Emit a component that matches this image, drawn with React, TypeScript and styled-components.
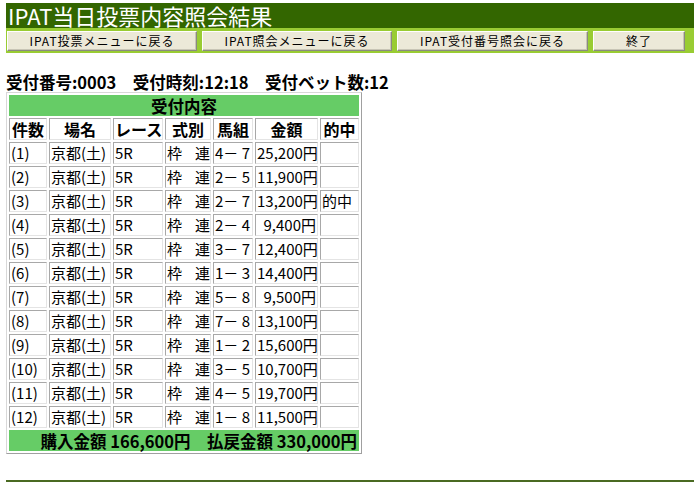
import React from "react";
import styled, { createGlobalStyle } from "styled-components";

const Global = createGlobalStyle`
  html, body { margin: 0; padding: 0; background: #ffffff; }
  body { font-family: "Noto Sans CJK JP", "Noto Sans", sans-serif; color: #000; }
`;

const Page = styled.div`
  padding: 3px 0 0 6px;
`;

const TitleBar = styled.div`
  background: #336600;
  color: #ffffff;
  height: 25px;
  display: flex;
  align-items: center;
  padding-left: 2px;
  font-size: 22px;
  line-height: 25px;
`;

const ButtonBar = styled.div`
  background: #99cc33;
  height: 25px;
  display: flex;
  align-items: center;
  gap: 5px;
  padding-left: 1px;
`;

const NavButton = styled.button<{ $w: number }>`
  width: ${(p) => p.$w}px;
  height: 20px;
  background: #ece9d8;
  border: 1px solid;
  border-color: #ffffff #8a8a80 #8a8a80 #ffffff;
  box-shadow: inset -1px -1px 0 #c8c5b5;
  font-family: "Noto Sans CJK JP", sans-serif;
  font-size: 12px;
  letter-spacing: 1px;
  color: #000;
  padding: 0;
  line-height: 18px;
`;

const Info = styled.div`
  margin-top: 20px;
  font-size: 16.5px;
  font-weight: bold;
  line-height: 19px;
  white-space: pre;
`;

const Table = styled.table`
  table-layout: fixed;
  width: 356px;
  border-collapse: separate;
  border-spacing: 2px;
  border: 1px solid;
  border-color: #d8d8d8 #a0a0a0 #a0a0a0 #d8d8d8;
  font-size: 15px;
  line-height: 18px;
`;

const Col = styled.col<{ $w: number }>`
  width: ${(p) => p.$w}px;
`;

const Cell = styled.td<{ $align?: string }>`
  height: 22px;
  padding: 0 1px;
  border: 1px solid;
  border-color: #a8a8a8 #e4e4e4 #e4e4e4 #a8a8a8;
  text-align: ${(p) => p.$align || "left"};
  white-space: pre;
  overflow: visible;
  box-sizing: border-box;
`;

const TightCell = styled(Cell)`
  letter-spacing: -1px;
`;

const HeadCell = styled(Cell)`
  font-weight: bold;
  font-size: 16px;
  text-align: center;
  height: 22px;
`;

const GreenCell = styled.td<{ $align?: string }>`
  background: #66cc66;
  height: 21px;
  padding: 0 2px;
  border: 0;
  font-weight: bold;
  font-size: 16.5px;
  text-align: ${(p) => p.$align || "center"};
  white-space: pre;
  box-sizing: border-box;
`;

const Rule = styled.div`
  margin-top: 26px;
  height: 2px;
  background: #4a6a22;
`;

const rows: [string, string, string][] = [
  ["(1)", "4－ 7", "25,200円"],
  ["(2)", "2－ 5", "11,900円"],
  ["(3)", "2－ 7", "13,200円"],
  ["(4)", "2－ 4", "9,400円"],
  ["(5)", "3－ 7", "12,400円"],
  ["(6)", "1－ 3", "14,400円"],
  ["(7)", "5－ 8", "9,500円"],
  ["(8)", "7－ 8", "13,100円"],
  ["(9)", "1－ 2", "15,600円"],
  ["(10)", "3－ 5", "10,700円"],
  ["(11)", "4－ 5", "19,700円"],
  ["(12)", "1－ 8", "11,500円"],
];

const colWidths = [38, 62, 50, 46, 40, 63, 39];

export default function App() {
  return (
    <>
      <Global />
      <Page>
        <TitleBar>IPAT当日投票内容照会結果</TitleBar>
        <ButtonBar>
          <NavButton $w={190}>IPAT投票メニューに戻る</NavButton>
          <NavButton $w={190}>IPAT照会メニューに戻る</NavButton>
          <NavButton $w={191}>IPAT受付番号照会に戻る</NavButton>
          <NavButton $w={92}>終了</NavButton>
        </ButtonBar>
        <Info>{"受付番号:0003　受付時刻:12:18　受付ベット数:12"}</Info>
        <Table>
          <colgroup>
            {colWidths.map((w, i) => (
              <Col key={i} $w={w} />
            ))}
          </colgroup>
          <tbody>
            <tr>
              <GreenCell colSpan={7}>受付内容</GreenCell>
            </tr>
            <tr>
              <HeadCell>件数</HeadCell>
              <HeadCell>場名</HeadCell>
              <HeadCell>レース</HeadCell>
              <HeadCell>式別</HeadCell>
              <HeadCell>馬組</HeadCell>
              <HeadCell>金額</HeadCell>
              <HeadCell>的中</HeadCell>
            </tr>
            {rows.map(([n, kumi, amt], i) => (
              <tr key={n}>
                <Cell>{n}</Cell>
                <Cell>京都(土)</Cell>
                <Cell>5R</Cell>
                <TightCell>{"枠　連"}</TightCell>
                <Cell>{kumi}</Cell>
                <Cell $align="right">{amt}</Cell>
                <Cell>{i === 2 ? "的中" : " "}</Cell>
              </tr>
            ))}
            <tr>
              <GreenCell colSpan={7} $align="right">
                {"購入金額 166,600円　払戻金額 330,000円"}
              </GreenCell>
            </tr>
          </tbody>
        </Table>
        <Rule />
      </Page>
    </>
  );
}
